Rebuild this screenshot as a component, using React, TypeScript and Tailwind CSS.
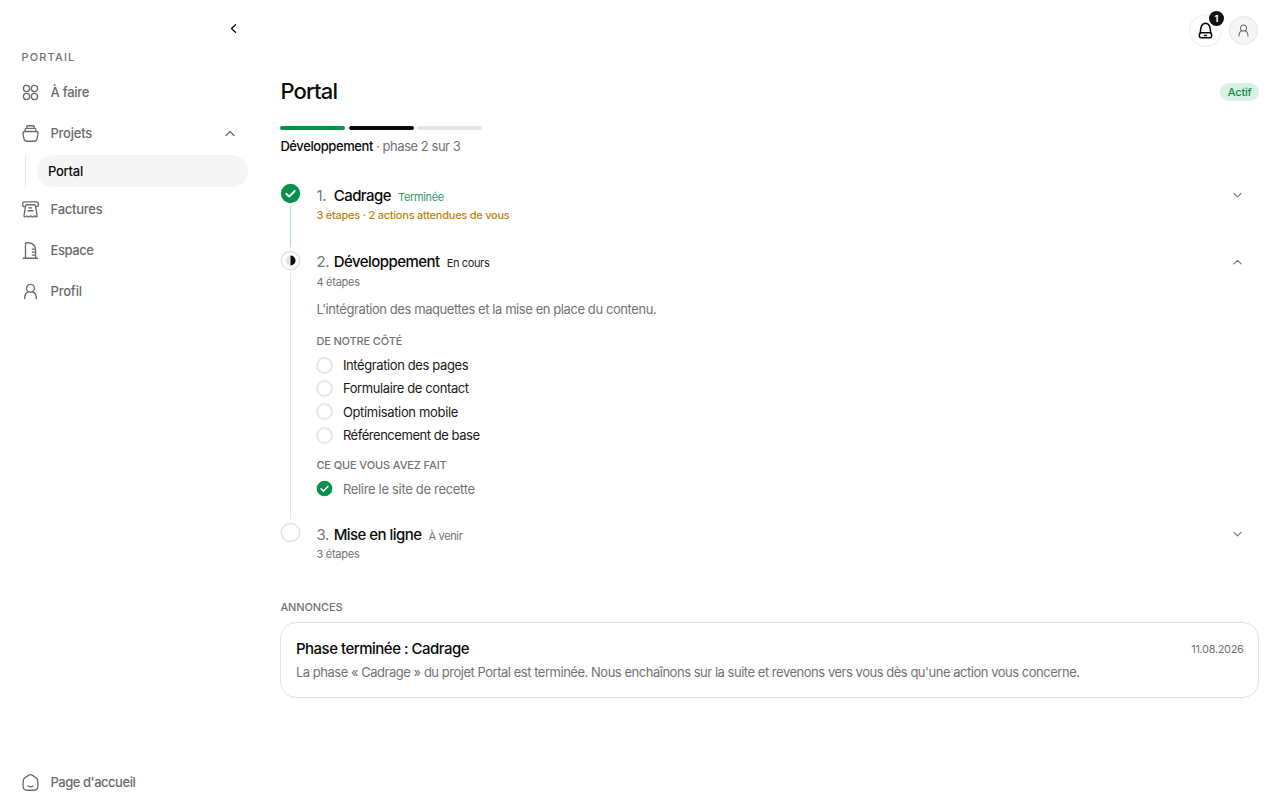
import type { ReactNode } from "react";

function Chevron({ dir, className }: { dir: "up" | "down" | "left"; className: string }) {
  const d = dir === "up" ? "M1 5.5 5 1.5l4 4" : dir === "down" ? "M1 1.5l4 4 4-4" : "M5.5 0.8 1.5 4.5l4 3.7";
  const box = dir === "left" ? "0 0 7 9" : "0 0 10 7";
  return (
    <svg viewBox={box} className={className} fill="none" stroke="currentColor" strokeWidth="1.3" strokeLinecap="round" strokeLinejoin="round">
      <path d={d} />
    </svg>
  );
}

function Icon({ children, className = "size-[17px]" }: { children: ReactNode; className?: string }) {
  return (
    <svg viewBox="0 0 18 18" className={`${className} shrink-0`} fill="none" stroke="currentColor" strokeWidth="1.4" strokeLinecap="round" strokeLinejoin="round">
      {children}
    </svg>
  );
}

const person = (
  <>
    <circle cx="9" cy="5.6" r="4.2" />
    <path d="M2.8 16.6c0-4.3 1.9-6.7 4.2-7.2M15.2 16.6c0-4.3-1.9-6.7-4.2-7.2" />
  </>
);

function NavItem({ icon, label, children }: { icon: ReactNode; label: ReactNode; children?: ReactNode }) {
  return (
    <a className="flex h-[41.3px] items-center gap-[11.5px] pr-[13.5px] pl-[22px] text-[13px] font-medium text-[#6b6b6b]">
      {icon}
      <span className="flex-1 pt-px">{label}</span>
      {children}
    </a>
  );
}

function Check({ className }: { className: string }) {
  return (
    <svg viewBox="0 0 20 20" className={`${className} shrink-0`}>
      <circle cx="10" cy="10" r="9.2" fill="#07914b" />
      <path d="m6 10.3 2.8 2.7 5.2-5.4" fill="none" stroke="#fff" strokeWidth="1.9" strokeLinecap="round" strokeLinejoin="round" />
    </svg>
  );
}

function Phase({ marker, line, num, title, status, chevron, children, className }: {
  marker: ReactNode; line?: string; num: string; title: string; status: ReactNode; chevron: "up" | "down"; children: ReactNode; className: string;
}) {
  return (
    <li className={`flex gap-[15px] ${className}`}>
      <div className="flex w-[21px] shrink-0 flex-col items-center">
        {marker}
        {line && <div className={`mt-[2px] mb-[3px] w-px flex-1 ${line}`} />}
      </div>
      <div className="flex-1 pt-[3.5px]">
        <div className="flex h-[19.4px] items-center pr-[17px]">
          <div className="flex flex-1 items-baseline text-[15px] leading-5 font-medium tracking-[-0.54px] text-[#0a0a0a]">
            <span className="w-[17.3px] font-normal tracking-[-0.2px] text-[#777]">{num}</span>
            <span>{title}</span>
            <span className="ml-[7px] text-[11px] font-normal tracking-[-0.35px]">{status}</span>
          </div>
          <Chevron dir={chevron} className="mb-[2px] h-[6.3px] w-[9px] text-[#777]" />
        </div>
        {children}
      </div>
    </li>
  );
}

const tasks = [
  <span className="tracking-[-0.39px]">Intégration des pages</span>,
  <span className="tracking-[-0.39px]">Formulaire de contact</span>,
  <span className="tracking-[-0.34px]">Optimisation mobile</span>,
  <span className="tracking-[-0.46px]">Référencement de base</span>,
];

export default function App() {
  return (
    <div className="flex h-[800px] w-full overflow-hidden bg-white font-['Inter',sans-serif] text-[#0a0a0a]">
      <aside className="flex w-[248px] shrink-0 flex-col">
        <div className="flex h-[50px] items-center justify-end pt-[7px] pr-[11px]">
          <Chevron dir="left" className="h-[9px] w-[7px]" />
        </div>
        <div className="h-[21.4px] pl-[21.5px] text-[11px] leading-[15px] font-medium tracking-[1.15px] text-[#737373]">PORTAIL</div>
        <nav>
          <NavItem label={<span className="tracking-[-0.25px]">À faire</span>} icon={<Icon><circle cx="4.8" cy="4.8" r="3.3" /><circle cx="13.2" cy="4.8" r="3.3" /><circle cx="4.8" cy="13.2" r="3.3" /><circle cx="13.2" cy="13.2" r="3.3" /></Icon>} />
          <NavItem label={<span className="tracking-[-0.25px]">Projets</span>} icon={<Icon><path d="M5 3.400V2q0-1.200 1.200-1.200h5.600q1.200 0 1.200 1.200v1.400M3.200 6.800V5q0-1.500 1.500-1.500h8.600q1.500 0 1.500 1.500v1.800M1 9q0-2.100 2.100-2.100h11.800q2.100 0 2.100 2.100l-1 5.200q-.5 3-3 3H5q-2.500 0-3-3z" /></Icon>}>
            <Chevron dir="up" className="h-[7px] w-[10px]" />
          </NavItem>
          <div className="mt-[0.6px] mb-[1.4px] ml-[25px] flex h-[32.5px] border-l border-[#e5e5e5] pl-[11px]">
            <a className="flex flex-1 items-center rounded-full bg-[#f5f5f5] pt-px pl-[11px] text-[13px] font-medium tracking-[-0.25px]">Portal</a>
          </div>
          <NavItem label={<span className="tracking-[-0.25px]">Factures</span>} icon={<Icon><path d="M2.300 6Q.7 6 .7 4.500V2.700q0-1.700 1.700-1.700h13.200q1.700 0 1.700 1.700v1.800q0 1.500-1.600 1.500M5.600 4h6.800q1.900 0 2.100 1.900l1.500 9.800c.1 1.100-1 1.500-1.800.8-.8-.8-1.300-.8-2 0-.7.700-1.400.7-2.100 0-.7-.8-1.300-.8-2 0-.7.700-1.400.7-2.100 0-.7-.8-1.300-.8-2.100 0-.8.700-1.900.3-1.800-.8l1.500-9.800Q3.700 4 5.600 4M7 7.300h3M6.600 10.300h5" /></Icon>} />
          <NavItem label={<span className="tracking-[-0.43px]">Espace</span>} icon={<Icon><path d="M1.300 17.200h15M3.700 17V2.300q0-1.500 1.500-1.500h1.500q7.700.5 7.700 8.200v8M14.200 7.500h-3.300M14.200 10.700h-3.300M14.200 13.900h-3.300" /></Icon>} />
          <NavItem label={<span className="tracking-[-0.2px]">Profil</span>} icon={<Icon>{person}</Icon>} />
        </nav>
        <div className="mt-auto mb-[-3px]">
          <NavItem label={<span className="tracking-[-0.47px]">Page d'accueil</span>} icon={<Icon><path d="M7.300 1.200q1.700-1 3.400 0l4.200 2.700q1.500 1 1.700 2.700l.3 5.600q0 5-4.200 5H5.300q-4.200 0-4.200-5l.3-5.600q.2-1.700 1.700-2.700zM6.500 12.700q2.500 1.800 5 0" /></Icon>} />
        </div>
      </aside>

      <main className="flex-1 pr-[21px] pl-[32.4px]">
        <header className="flex h-[61px] items-center justify-end gap-[7px] pr-px">
          <button className="relative flex size-[33px] items-center justify-center rounded-full border border-[#ececec]">
            <Icon className="size-[17px]"><g strokeWidth="1.6"><path d="M3.500 11.500C3.900 6.500 4.300 1.300 9 1.300s5.100 5.200 5.500 10.200" /><path d="M3.500 11.500h11c1.600 1.700 1.600 5.200-1 5.200h-9c-2.600 0-2.600-3.500-1-5.200ZM8 14.200h2" /></g></Icon>
            <span className="absolute top-[-4px] right-[-3px] flex size-[15px] items-center justify-center rounded-full bg-[#111] text-[9px] font-bold text-white">1</span>
          </button>
          <div className="flex size-[29px] items-center justify-center rounded-full border border-[#e5e5e5] bg-[#f5f5f5] text-[#666]">
            <Icon className="size-[13px]">{person}</Icon>
          </div>
        </header>

        <div className="flex h-[62px] items-center justify-between">
          <h1 className="mb-[2px] text-[22px] font-medium tracking-[-0.85px]">Portal</h1>
          <span className="flex h-[18px] items-center rounded-full bg-[#d9f0e4] px-[7.5px] text-[11px] font-medium tracking-[-0.2px] text-[#07914b]">Actif</span>
        </div>
        <div className="mt-[3.2px] flex h-[4px] gap-[3.3px]">
          <div className="w-[65px] rounded-full bg-[#07914b]" />
          <div className="w-[65px] rounded-full bg-[#0a0a0a]" />
          <div className="w-[65px] rounded-full bg-[#e5e5e5]" />
        </div>
        <p className="mt-[6px] h-[20px] text-[13px] leading-5 tracking-[-0.47px] text-[#737373]"><span className="font-medium tracking-[-0.41px] text-[#0a0a0a]">Développement</span> · phase 2 sur 3</p>

        <ol className="mt-[27px]">
          <Phase className="h-[66.5px]" marker={<Check className="size-[21px]" />} line="bg-[#b5dec9]" num="1." title="Cadrage" status={<span className="text-[#2aa066]">Terminée</span>} chevron="down">
            <p className="text-[11px] leading-[18px] font-medium tracking-[-0.24px] text-[#b8860b]">3 étapes · 2 actions attendues de vous</p>
          </Phase>
          <Phase className="h-[272.5px]" marker={
            <svg viewBox="0 0 21 21" className="size-[21px] shrink-0"><circle cx="10.5" cy="10.5" r="9.2" fill="#fff" stroke="#e5e5e5" strokeWidth="1.7" /><circle cx="10.5" cy="10.5" r="5" fill="#e5e5e5" /><path d="M10.500 5.500a5 5 0 0 1 0 10z" fill="#0a0a0a" /></svg>
          } line="bg-[#e5e5e5]" num="2." title="Développement" status={<span className="text-[#262626]">En cours</span>} chevron="up">
            <p className="text-[11px] leading-[18px] tracking-[-0.25px] text-[#737373]">4 étapes</p>
            <p className="mt-[8.5px] text-[13px] leading-5 tracking-[-0.42px] text-[#737373]">L'intégration des maquettes et la mise en place du contenu.</p>
            <h3 className="mt-[14px] text-[11px] leading-4 font-medium tracking-[-0.15px] text-[#737373]">DE NOTRE CÔTÉ</h3>
            <ul className="mt-[4.5px]">
              {tasks.map((task, i) => (
                <li key={i} className="flex h-[23.35px] items-center gap-[9.5px] text-[13px] text-[#1a1a1a]">
                  <span className="size-[17px] rounded-full border-2 border-[#e8e8e8]" />
                  <span className="pt-px">{task}</span>
                </li>
              ))}
            </ul>
            <h3 className="mt-[9.8px] text-[11px] leading-4 font-medium tracking-[-0.12px] text-[#737373]">CE QUE VOUS AVEZ FAIT</h3>
            <div className="mt-[4.5px] flex h-[23px] items-center gap-[9.5px] text-[13px] text-[#737373]">
              <Check className="size-[17px]" />
              <span className="pt-px tracking-[-0.32px]">Relire le site de recette</span>
            </div>
          </Phase>
          <Phase className="h-[42px]" marker={<svg viewBox="0 0 21 21" className="size-[21px] shrink-0"><circle cx="10.5" cy="10.5" r="9.2" fill="#fff" stroke="#e5e5e5" strokeWidth="1.7" /></svg>} num="3." title="Mise en ligne" status={<span className="text-[#737373]">À venir</span>} chevron="down">
            <p className="text-[11px] leading-[18px] tracking-[-0.25px] text-[#737373]">3 étapes</p>
          </Phase>
        </ol>

        <h2 className="mt-[35px] text-[11px] leading-4 font-medium tracking-[-0.12px] text-[#737373]">ANNONCES</h2>
        <article className="mt-[6.8px] h-[76px] rounded-[16px] border border-[#e5e5e5] px-[14.5px] pt-[15.2px]">
          <div className="flex h-[22px] items-center justify-between">
            <h3 className="text-[15px] font-medium tracking-[-0.5px]">Phase terminée : Cadrage</h3>
            <time className="text-[11px] tracking-[-0.35px] text-[#737373]">11.08.2026</time>
          </div>
          <p className="mt-[1.8px] text-[13px] leading-5 tracking-[-0.475px] whitespace-nowrap text-[#737373]">La phase « Cadrage » du projet Portal est terminée. Nous enchaînons sur la suite et revenons vers vous dès qu'une action vous concerne.</p>
        </article>
      </main>
    </div>
  );
}
